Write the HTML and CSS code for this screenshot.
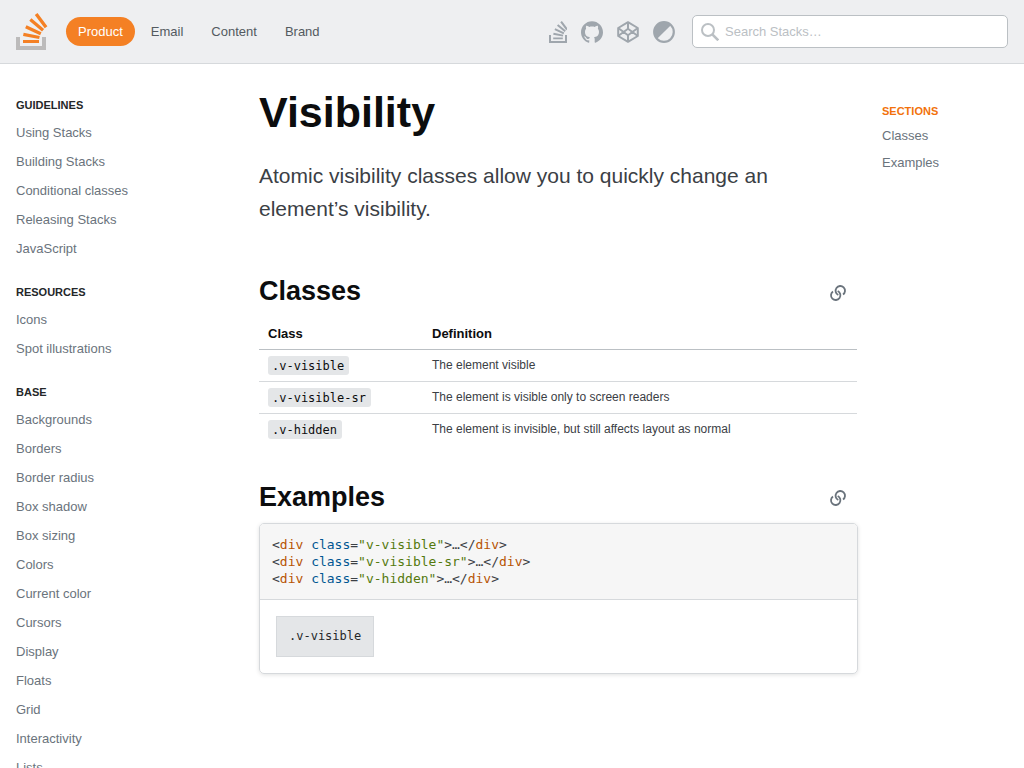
FILE: index.html
```html
<!DOCTYPE html>
<html lang="en">
<head>
<meta charset="utf-8">
<title>Visibility - Stacks</title>
<link rel="stylesheet" href="styles.css">
</head>
<body>
<header class="topbar">
  <a class="logo" href="#"><svg width="32" height="37" viewBox="0 0 32 37"><path d="M26 33v-9h4v13H0V24h4v9h22Z" fill="#bcbbbb"/><path d="m21.5 0-2.7 2 9.9 13.3 2.7-2L21.5 0ZM26 18.4 13.3 7.8l2.1-2.5 12.7 10.6-2.1 2.5ZM9.1 15.2l15 7 1.4-3-15-7-1.4 3Zm14 10.79.68-2.95-16.1-3.35L7 23l16.1 2.99ZM23 30H7v-3h16v3Z" fill="#f48024"/></svg></a>
  <nav class="tabs">
    <a class="tab tab-active" href="#">Product</a>
    <a class="tab" href="#">Email</a>
    <a class="tab" href="#">Content</a>
    <a class="tab" href="#">Brand</a>
  </nav>
  <div class="tools">
    <svg class="tool" viewBox="0 0 22 22"><path d="M5 14v7h16v-7" fill="none" stroke="currentColor" stroke-width="2"/><path transform="translate(4 0) scale(.6)" d="m21.5 0-2.7 2 9.9 13.3 2.7-2L21.5 0ZM26 18.4 13.3 7.8l2.1-2.5 12.7 10.6-2.1 2.5ZM9.1 15.2l15 7 1.4-3-15-7-1.4 3Zm14 10.79.68-2.95-16.1-3.35L7 23l16.1 2.99ZM23 30.5H7v-3h16v3Z"/></svg>
    <svg class="tool" viewBox="0 0 24 24"><path d="M12 .297c-6.63 0-12 5.373-12 12 0 5.303 3.438 9.8 8.205 11.385.6.113.82-.258.82-.577 0-.285-.01-1.04-.015-2.04-3.338.724-4.042-1.61-4.042-1.61C4.422 18.07 3.633 17.7 3.633 17.7c-1.087-.744.084-.729.084-.729 1.205.084 1.838 1.236 1.838 1.236 1.07 1.835 2.809 1.305 3.495.998.108-.776.417-1.305.76-1.605-2.665-.3-5.466-1.332-5.466-5.93 0-1.31.465-2.38 1.235-3.22-.135-.303-.54-1.523.105-3.176 0 0 1.005-.322 3.3 1.23.96-.267 1.98-.399 3-.405 1.02.006 2.04.138 3 .405 2.28-1.552 3.285-1.23 3.285-1.23.645 1.653.24 2.873.12 3.176.765.84 1.23 1.91 1.23 3.22 0 4.61-2.805 5.625-5.475 5.92.42.36.81 1.096.81 2.22 0 1.606-.015 2.896-.015 3.286 0 .315.21.69.825.57C20.565 22.092 24 17.592 24 12.297c0-6.627-5.373-12-12-12"/></svg>
    <svg class="tool" viewBox="0 0 22 22"><path d="M11 1.2 20.8 7v8L11 20.8 1.2 15V7ZM11 1.5V7.5M11 14.5v6M1.2 7 11 14.2 20.8 7M1.2 15 11 7.8 20.8 15" fill="none" stroke="currentColor" stroke-width="2" stroke-linejoin="round"/></svg>
    <svg class="tool" viewBox="0 0 22 22"><circle cx="11" cy="11" r="9.8" fill="none" stroke="currentColor" stroke-width="2.2"/><path d="M18.1 3.9A10 10 0 0 0 3.9 18.1Z"/></svg>
  </div>
  <div class="search">
    <svg class="search-icon" width="18" height="18" viewBox="0 0 18 18"><circle cx="7" cy="7" r="6" fill="none" stroke="currentColor" stroke-width="2"/><path d="m11.3 11.3 6 6" stroke="currentColor" stroke-width="2.6"/></svg>
    <span>Search Stacks…</span>
  </div>
</header>
<div class="page">
  <nav class="sidebar">
    <h4>Guidelines</h4>
    <a href="#">Using Stacks</a><a href="#">Building Stacks</a><a href="#">Conditional classes</a><a href="#">Releasing Stacks</a><a href="#">JavaScript</a>
    <h4>Resources</h4>
    <a href="#">Icons</a><a href="#">Spot illustrations</a>
    <h4>Base</h4>
    <a href="#">Backgrounds</a><a href="#">Borders</a><a href="#">Border radius</a><a href="#">Box shadow</a><a href="#">Box sizing</a><a href="#">Colors</a><a href="#">Current color</a><a href="#">Cursors</a><a href="#">Display</a><a href="#">Floats</a><a href="#">Grid</a><a href="#">Interactivity</a><a href="#">Lists</a>
  </nav>
  <main class="content">
    <h1>Visibility</h1>
    <p class="lead">Atomic visibility classes allow you to quickly change an element’s visibility.</p>
    <div class="section-head classes-head"><h2>Classes</h2>
      <svg class="link" viewBox="0 0 18 18"><path d="M14 10.55A4.7 4.7 0 1 0 9.3 10.95M4 7.45A4.7 4.7 0 1 0 8.7 7.05" fill="none" stroke="currentColor" stroke-width="1.8"/></svg></div>
    <table class="classes">
      <thead><tr><th class="name-col">Class</th><th>Definition</th></tr></thead>
      <tbody>
        <tr><td><code>.v-visible</code></td><td>The element visible</td></tr>
        <tr><td><code>.v-visible-sr</code></td><td>The element is visible only to screen readers</td></tr>
        <tr><td><code>.v-hidden</code></td><td>The element is invisible, but still affects layout as normal</td></tr>
      </tbody>
    </table>
    <div class="section-head examples-head"><h2>Examples</h2>
      <svg class="link" viewBox="0 0 18 18"><path d="M14 10.55A4.7 4.7 0 1 0 9.3 10.95M4 7.45A4.7 4.7 0 1 0 8.7 7.05" fill="none" stroke="currentColor" stroke-width="1.8"/></svg></div>
    <div class="preview">
<pre>&lt;<span class="tag">div</span> <span class="attr">class</span>=<span class="str">"v-visible"</span>&gt;…&lt;/<span class="tag">div</span>&gt;
&lt;<span class="tag">div</span> <span class="attr">class</span>=<span class="str">"v-visible-sr"</span>&gt;…&lt;/<span class="tag">div</span>&gt;
&lt;<span class="tag">div</span> <span class="attr">class</span>=<span class="str">"v-hidden"</span>&gt;…&lt;/<span class="tag">div</span>&gt;</pre>
      <div class="demo"><div class="demo-box">.v-visible</div></div>
    </div>
  </main>
  <nav class="toc">
    <h4>Sections</h4>
    <a href="#">Classes</a><a href="#">Examples</a>
  </nav>
</div>
</body>
</html>
```
FILE: styles.css
```css
* { box-sizing: border-box; }
body {
  margin: 0;
  height: 768px;
  overflow: hidden;
  font: 13px/17px "Liberation Sans", Arial, sans-serif;
  color: #3b4045;
  background: #fff;
}
a { color: inherit; text-decoration: none; }
h1, h2, h4, p, pre { margin: 0; }
svg { display: block; fill: currentColor; }

.topbar {
  display: flex;
  align-items: center;
  height: 64px;
  padding: 0 16px;
  background: #eeeff1;
  border-bottom: 1px solid #d6d9dc;
}
.logo { margin-right: 18px; }
.tabs { display: flex; gap: 4px; }
.tab { padding: 6px 12px; border-radius: 1000px; color: #535a60; }
.tab-active { background: #f48024; color: #fff; }
.tools { display: flex; gap: 14px; margin-left: auto; color: #9fa6ad; }
.tool { width: 22px; height: 22px; }
.search {
  display: flex;
  align-items: center;
  gap: 6px;
  width: 316px;
  height: 33px;
  margin-left: 17px;
  padding-left: 8px;
  border: 1px solid #bbc0c4;
  border-radius: 5px;
  background: #fff;
  color: #bbc0c4;
}

.page { display: flex; }
.sidebar { width: 259px; padding: 0 16px; }
.sidebar a { display: block; padding: 6px 0; color: #6a737c; }
h4 { font-size: 11px; line-height: 14px; text-transform: uppercase; color: #242729; }
.sidebar h4 { margin: 22px 0 6px; }
.sidebar h4:first-child { margin-top: 34px; }

.content { width: 599px; padding-top: 23px; }
h1 { font-size: 43px; line-height: 50px; color: #0c0d0e; }
.lead { margin-top: 22px; font-size: 21px; line-height: 33px; }
.section-head { display: flex; align-items: center; justify-content: space-between; padding-right: 11px; }
h2 { font-size: 27px; line-height: 35px; color: #0c0d0e; }
.link { width: 18px; height: 18px; margin-top: 3px; color: #6a737c; }
.classes-head { margin-top: 49px; }
.examples-head { margin-top: 35px; }
.examples-head .link { margin-top: 1px; }

.classes { width: 598px; margin-top: 8px; border-collapse: collapse; font-size: 12px; }
.classes th { height: 32px; padding: 2px 9px 0; text-align: left; font-size: 13px; color: #0c0d0e; border-bottom: 1px solid #bbc0c4; }
.classes td { height: 32px; padding: 0 9px; border-bottom: 1px solid #d6d9dc; }
.classes tr:last-child td { border-bottom: 0; }
.name-col { width: 164px; }
code { display: inline-block; padding: 3px 5px 1px 4px; border-radius: 3px; background: #e4e6e8; font: 12px/15px "DejaVu Sans Mono", monospace; color: #0c0d0e; vertical-align: middle; }

.preview { margin-top: 8px; border: 1px solid #d6d9dc; border-radius: 5px; box-shadow: 0 1px 4px rgba(12, 13, 14, .12); overflow: hidden; }
pre { padding: 12px; height: 76px; background: #f6f6f6; border-bottom: 1px solid #d6d9dc; font: 13px/17px "DejaVu Sans Mono", monospace; }
.tag { color: #b75301; }
.attr { color: #015692; }
.str { color: #54790d; }
.demo { padding: 16px; }
.demo-box { width: 98px; height: 41px; padding: 11px 12px; background: #e4e6e8; border: 1px solid #d6d9dc; font: 12px/17px "DejaVu Sans Mono", monospace; color: #242729; white-space: nowrap; }

.toc { padding: 40px 0 0 24px; color: #6a737c; }
.toc h4 { margin-bottom: 4px; color: #f2720c; }
.toc a { display: block; padding: 5px 0; }
```
